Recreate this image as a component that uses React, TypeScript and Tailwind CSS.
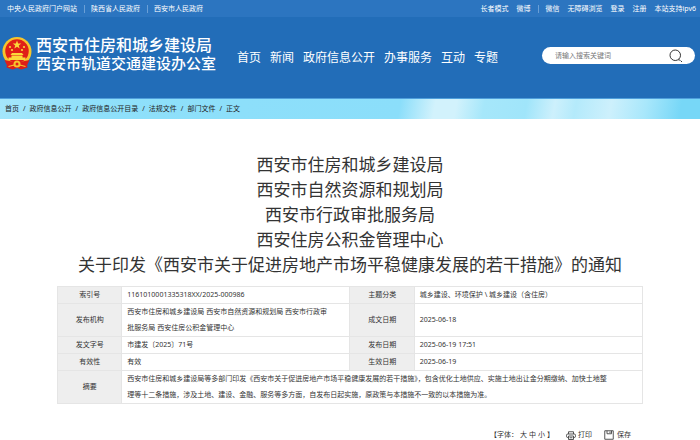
import React from "react";

const siteLinks = ["中央人民政府门户网站", "陕西省人民政府", "西安市人民政府"];
const navItems = ["首页", "新闻", "政府信息公开", "办事服务", "互动", "专题"];
const crumbs = ["首页", "政府信息公开", "政府信息公开目录", "法规文件", "部门文件"];

function Emblem() {
  return (
    <svg viewBox="0 0 60 66" className="h-[33px] w-[30px] shrink-0" role="img" aria-label="国徽">
      <path d="M11 46 L9 61 L21 65 L30 62 L39 65 L51 61 L49 46Z" fill="#dc1f1a" />
      <circle cx="30" cy="29" r="29" fill="#f6c52c" />
      <circle cx="30" cy="28" r="23.500" fill="#e01f18" />
      <path d="M30 7l2.200 6h6.300l-5 4 1.900 6-5.400-3.600-5.400 3.600 1.900-6-5-4h6.300z" fill="#fbd83a" />
      <g fill="#fbd83a">
        <circle cx="16" cy="20" r="2.200" />
        <circle cx="20" cy="26" r="2.200" />
        <circle cx="40" cy="26" r="2.200" />
        <circle cx="44" cy="20" r="2.200" />
        <path d="M20 32h20l3 4H17zM19 37h22v4H19zM13 41h34v5H13z" />
      </g>
      <path d="M5 46 Q30 52 55 46 L51 55 Q30 59 9 55Z" fill="#e01f18" />
      <circle cx="30" cy="54" r="7" fill="#f6c52c" />
      <circle cx="30" cy="54" r="3" fill="#e01f18" />
      <path d="M13 59l11-3M47 59l-11-3" stroke="#f6c52c" strokeWidth="2.500" />
    </svg>
  );
}

function PrintIcon() {
  return (
    <svg viewBox="0 0 20 18" className="h-[9px] w-[10px]" fill="none" stroke="#444" strokeWidth="1.800" aria-hidden="true">
      <path d="M5 6V1.500h10V6M5 13H3.500Q1 13 1 10.500v-2Q1 6 3.500 6h13Q19 6 19 8.500v2Q19 13 16.500 13H15M5 10h10v7H5zM7 13.500h6" />
    </svg>
  );
}

function SaveIcon() {
  return (
    <svg viewBox="0 0 20 20" className="h-[10px] w-[10px]" fill="none" stroke="#444" strokeWidth="1.800" aria-hidden="true">
      <path d="M1.500 1.500h17v17h-17zM6 1.500v6h9v-6M12 3v3" />
    </svg>
  );
}

function Label({ children }: { children: React.ReactNode }) {
  return (
    <th scope="row" className="border border-[#e5e5e5] bg-[#eeeeee] text-center font-normal">
      {children}
    </th>
  );
}

function Value({ children, span }: { children: React.ReactNode; span?: number }) {
  return (
    <td colSpan={span} className="border border-[#e5e5e5] px-[5px]">
      {children}
    </td>
  );
}

export default function App() {
  return (
    <div className="bg-white font-['Noto_Sans','Noto_Sans_CJK_SC',sans-serif] text-[7px] leading-4 text-[#333]">
      <div className="flex h-[17px] items-center justify-between bg-[#2c75c0] pr-1 pl-[7px] text-white">
        <nav aria-label="政府网站" className="flex items-center">
          {siteLinks.map((t, i) => (
            <a key={t} href="#" className={i ? "ml-[7px] border-l border-[#6a9fd6] pl-[6px] leading-[8px]" : "leading-[8px]"}>
              {t}
            </a>
          ))}
        </nav>
        <nav aria-label="快捷入口" className="flex items-center gap-2 leading-[8px]">
          <a href="#">长者模式</a>
          <a href="#">微博</a>
          <a href="#" className="border-l border-[#6a9fd6] pl-[6px]">微信</a>
          <a href="#">无障碍浏览</a>
          <a href="#">登录</a>
          <a href="#">注册</a>
          <a href="#">本站支持ipv6</a>
        </nav>
      </div>

      <header className="flex h-[81px] items-center bg-[#226db8] pr-[5px] pl-[2px] text-white">
        <div className="flex w-[214px] shrink-0 items-center gap-1 pb-2">
          <Emblem />
          <div className="font-medium whitespace-nowrap">
            <div className="text-[16px] leading-[18px]">西安市住房和城乡建设局</div>
            <div className="text-[15px] leading-[18px]">西安市轨道交通建设办公室</div>
          </div>
        </div>
        <nav aria-label="主导航" className="ml-[21px] flex gap-[9px] text-[12px] whitespace-nowrap">
          {navItems.map((t) => (
            <a key={t} href="#">{t}</a>
          ))}
        </nav>
        <form className="mb-1 ml-auto flex h-[17px] w-[153px] items-center rounded-full bg-white pr-3 pl-[13px]">
          <input
            type="text"
            aria-label="搜索"
            placeholder="请输入搜索关键词"
            className="min-w-0 flex-1 bg-transparent text-[7px] text-[#333] outline-none placeholder:text-[#777]"
          />
          <button type="button" aria-label="搜索">
            <svg viewBox="0 0 28 28" className="h-[14px] w-[14px]" fill="none" stroke="#333" strokeWidth="2" aria-hidden="true">
              <circle cx="12.500" cy="12.500" r="10.500" />
              <path d="M19 22h3M23 23l3 3" />
            </svg>
          </button>
        </form>
      </header>

      <nav
        aria-label="面包屑"
        className="flex h-[21px] items-center gap-1 border-t border-[#4f9fdc] bg-[linear-gradient(100deg,#a4e6fb_0%,#8fe0fa_12%,#8bdefa_57%,#d2f2fc_62%,#d2f2fc_65%,#a6e7fa_69%,#a0e5fa_75%,#cdf0fc_79%,#b4eafb_82%,#cdf0fc_87%,#a8e7fb_92%,#77d7f7_97%)] pl-[5px] text-[#222]"
      >
        {crumbs.map((t) => (
          <React.Fragment key={t}>
            <a href="#">{t}</a>
            <span>/</span>
          </React.Fragment>
        ))}
        <span>正文</span>
      </nav>

      <main className="px-[57px] pt-[33px]">
        <h1 className="text-center text-[17px] leading-[25px] whitespace-nowrap">
          西安市住房和城乡建设局
          <br />
          西安市自然资源和规划局
          <br />
          西安市行政审批服务局
          <br />
          西安住房公积金管理中心
          <br />
          关于印发《西安市关于促进房地产市场平稳健康发展的若干措施》的通知
        </h1>

        <table className="mt-[9px] w-full table-fixed border-collapse">
          <colgroup>
            <col className="w-[11%]" />
            <col className="w-[39%]" />
            <col className="w-[11%]" />
            <col className="w-[39%]" />
          </colgroup>
          <tbody>
            <tr>
              <Label>索引号</Label>
              <Value>1161010001335318XX/2025-000986</Value>
              <Label>主题分类</Label>
              <Value>城乡建设、环境保护 \ 城乡建设（含住房）</Value>
            </tr>
            <tr>
              <Label>发布机构</Label>
              <Value>
                西安市住房和城乡建设局 西安市自然资源和规划局 西安市行政审
                <br />
                批服务局 西安住房公积金管理中心
              </Value>
              <Label>成文日期</Label>
              <Value>2025-06-18</Value>
            </tr>
            <tr>
              <Label>发文字号</Label>
              <Value>市建发〔2025〕71号</Value>
              <Label>发布日期</Label>
              <Value>2025-06-19 17:51</Value>
            </tr>
            <tr>
              <Label>有效性</Label>
              <Value>有效</Value>
              <Label>生效日期</Label>
              <Value>2025-06-19</Value>
            </tr>
            <tr>
              <Label>摘要</Label>
              <Value span={3}>
                西安市住房和城乡建设局等多部门印发《西安市关于促进房地产市场平稳健康发展的若干措施》，包含优化土地供应、实施土地出让金分期缴纳、加快土地整
                <br />
                理等十二条措施，涉及土地、建设、金融、服务等多方面，自发布日起实施，原政策与本措施不一致的以本措施为准。
              </Value>
            </tr>
          </tbody>
        </table>

        <div className="mt-[23px] flex items-center justify-end gap-3 pr-3">
          <div className="flex gap-[2px]">
            <span>【字体：</span>
            <button type="button">大</button>
            <button type="button">中</button>
            <button type="button">小</button>
            <span>】</span>
          </div>
          <button type="button" className="flex items-center gap-[2px]">
            <PrintIcon />
            打印
          </button>
          <button type="button" className="flex items-center gap-[3px]">
            <SaveIcon />
            保存
          </button>
        </div>
      </main>
    </div>
  );
}
